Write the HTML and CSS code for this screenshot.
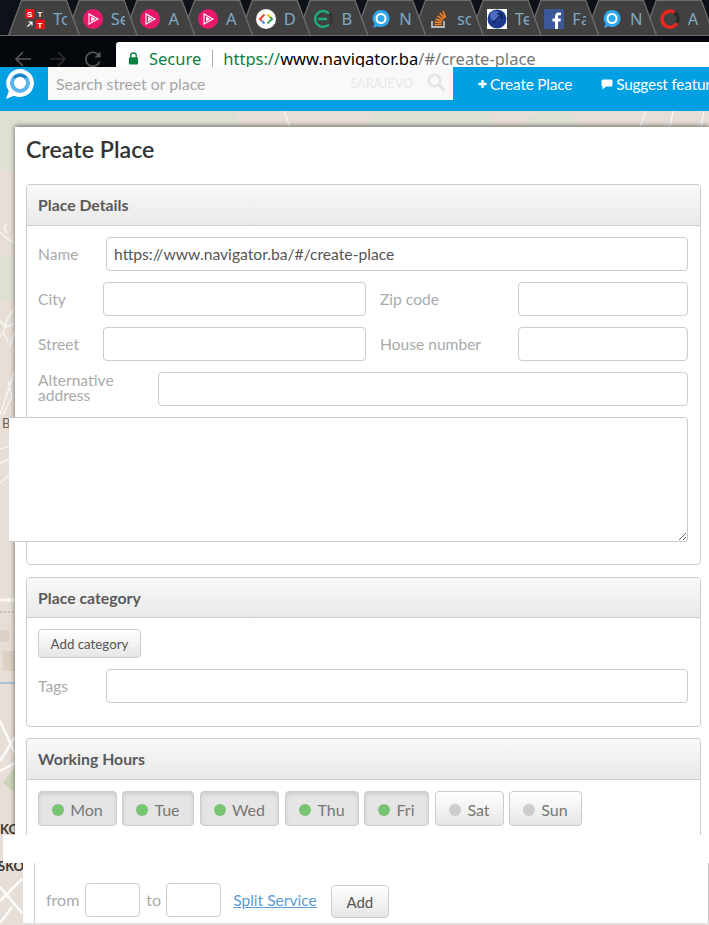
FILE: index.html
```html
<!DOCTYPE html>
<html lang="en">
<head>
    <meta charset="UTF-8">
    <title>Create Place</title>
    <link rel="stylesheet" href="styles.css">
</head>
<body>
<svg class="defs" width="0" height="0">
    <symbol id="ico-plural" viewBox="0 0 20 20">
        <circle cx="10" cy="10" r="10" fill="#e8196b"/>
        <path d="M6 5v10l9-5z" fill="none" stroke="#fff" stroke-width="1.1"/>
        <path d="M8 7.5v5l4.500-2.500z" fill="#fff"/>
    </symbol>
    <symbol id="ico-nav" viewBox="0 0 20 20">
        <path d="M10 1a8.500 8.500 0 1 1-3.500 16.200L2 19l1.500-4.200A8.500 8.500 0 0 1 10 1z" fill="#2ea8ee"/>
        <circle cx="10" cy="9.500" r="4.500" fill="none" stroke="#fff" stroke-width="2"/>
    </symbol>
</svg>

<div class="tabs">
    <div class="tab">
        <svg class="fav" viewBox="0 0 20 20">
            <rect x="0" y="0" width="9.500" height="9.500" fill="#e8141c"/>
            <rect x="10.500" y="0" width="9.500" height="9.500" fill="#444"/>
            <rect x="0" y="10.500" width="9.500" height="9.500" fill="#444"/>
            <rect x="10.500" y="10.500" width="9.500" height="9.500" fill="#e8141c"/>
            <text x="2" y="8" class="fav-text">S</text>
            <text x="12.500" y="8" class="fav-text">T</text>
            <path d="M2.500 17.500l4.500-4.500M3.500 13h3.500v3.500" fill="none" stroke="#fff" stroke-width="1.200"/>
            <text x="12.500" y="18.500" class="fav-text">T</text>
        </svg>
        <span class="tab-name">To</span>
    </div>
    <div class="tab"><svg class="fav"><use href="#ico-plural"/></svg><span class="tab-name">Se</span></div>
    <div class="tab"><svg class="fav"><use href="#ico-plural"/></svg><span class="tab-name">A</span></div>
    <div class="tab"><svg class="fav"><use href="#ico-plural"/></svg><span class="tab-name">A</span></div>
    <div class="tab">
        <svg class="fav" viewBox="0 0 20 20">
            <circle cx="10" cy="10" r="10" fill="#fff"/>
            <path d="M8.500 5.500L4 10l2 2" fill="none" stroke="#ea4335" stroke-width="2"/>
            <path d="M6 12l2.500 2.500" fill="none" stroke="#4285f4" stroke-width="2"/>
            <path d="M11.500 5.500L14 8" fill="none" stroke="#fbbc05" stroke-width="2"/>
            <path d="M14 8l2 2-4.500 4.500" fill="none" stroke="#34a853" stroke-width="2"/>
        </svg>
        <span class="tab-name">D</span>
    </div>
    <div class="tab">
        <svg class="fav" viewBox="0 0 20 20">
            <circle cx="10" cy="10" r="8" fill="none" stroke="#333" stroke-width="2.500"/>
            <path d="M15 4.500A8 8 0 1 0 15 15.500M4 10h9" fill="none" stroke="#1fae7d" stroke-width="2.500"/>
        </svg>
        <span class="tab-name">B</span>
    </div>
    <div class="tab"><svg class="fav"><use href="#ico-nav"/></svg><span class="tab-name">N</span></div>
    <div class="tab">
        <svg class="fav" viewBox="0 0 20 20">
            <path d="M3 12v6h12v-6" fill="none" stroke="#bcbbbb" stroke-width="1.800"/>
            <path d="M5.500 15.500h7M5.700 12.800l7 .8M6.500 10l6.800 2M8.300 7l6 3.500M10.800 4.200l4.800 5M14 2l2.600 6.500" fill="none" stroke="#f48024" stroke-width="1.700"/>
        </svg>
        <span class="tab-name">sc</span>
    </div>
    <div class="tab">
        <svg class="fav" viewBox="0 0 20 20">
            <rect width="20" height="20" fill="#fff"/>
            <circle cx="10" cy="10" r="9.500" fill="#1d3a8f"/>
            <circle cx="8" cy="7" r="5" fill="#4c6cc4"/>
            <path d="M6 14L15 5M10 5h5v5" fill="none" stroke="#10204f" stroke-width="1.500"/>
        </svg>
        <span class="tab-name">Te</span>
    </div>
    <div class="tab">
        <svg class="fav" viewBox="0 0 20 20">
            <rect width="20" height="20" rx="1" fill="#3b5998"/>
            <path d="M14 20v-7.500h2.500l.4-3H14V7.700c0-.9.300-1.400 1.500-1.400H17V3.600c-.3 0-1.200-.1-2.200-.1-2.200 0-3.800 1.300-3.800 3.800v2.200H8.500v3H11V20z" fill="#fff"/>
        </svg>
        <span class="tab-name">Fa</span>
    </div>
    <div class="tab"><svg class="fav"><use href="#ico-nav"/></svg><span class="tab-name">N</span></div>
    <div class="tab">
        <svg class="fav" viewBox="0 0 20 20">
            <path d="M14.500 3.500A8 8 0 1 0 17 14" fill="none" stroke="#e8281e" stroke-width="3.500"/>
            <path d="M14.500 3.500A8 8 0 0 1 17 14" fill="none" stroke="#2a2a2a" stroke-width="3.500"/>
        </svg>
        <span class="tab-name">A</span>
    </div>
</div>

<div class="toolbar">
    <div class="nav-btns">
        <svg class="nav-ico" viewBox="0 0 18 18"><path d="M17 9H2M9 2L2 9l7 7" fill="none" stroke="#5a5a5a" stroke-width="1.600"/></svg>
        <svg class="nav-ico" viewBox="0 0 18 18"><path d="M1 9h15M9 2l7 7-7 7" fill="none" stroke="#2e2e2e" stroke-width="1.600"/></svg>
        <svg class="nav-ico" viewBox="0 0 18 18"><path d="M15.500 11.500A7 7 0 1 1 14 4.500" fill="none" stroke="#5a5a5a" stroke-width="1.700"/><path d="M10.500 7.500H16.500V1.500z" fill="#5a5a5a"/></svg>
    </div>
    <div class="urlbar">
        <svg class="lock" viewBox="0 0 12 14"><path d="M3 6V4a3 3 0 0 1 6 0v2" fill="none" stroke="#0b8043" stroke-width="1.500"/><rect x="1" y="5.500" width="10" height="8" rx="1" fill="#0b8043"/></svg>
        <span class="secure">Secure</span>
        <span class="url-sep"></span>
        <span class="url"><span class="secure">https://</span>www.navigator.ba<span class="url-path">/#/create-place</span></span>
    </div>
</div>

<header class="appbar">
    <div class="logo">
        <svg viewBox="0 0 30 32" width="30" height="32">
            <path d="M15 1a14 14 0 1 1-6 26.700L1 31l2.800-8A14 14 0 0 1 15 1z" fill="#fff"/>
            <circle cx="15" cy="15" r="8" fill="none" stroke="#5db4e8" stroke-width="4"/>
            <path d="M9 10a8 8 0 0 1 12 0" fill="none" stroke="#1b7fc4" stroke-width="2.500"/>
        </svg>
    </div>
    <div class="search">
        <span class="search-hint">Search street or place</span>
        <span class="search-city">SARAJEVO</span>
        <svg class="search-ico" viewBox="0 0 20 20"><circle cx="8" cy="8" r="6" fill="none" stroke="#e4e4e2" stroke-width="2.800"/><path d="M12.500 12.500L18.500 18.500" stroke="#e4e4e2" stroke-width="3.200"/></svg>
    </div>
    <nav class="appnav">
        <a class="appnav-item">
            <svg class="appnav-ico" viewBox="0 0 10 10"><path d="M5 .5v9M.5 5h9" stroke="#fff" stroke-width="2.600"/></svg>
            Create Place
        </a>
        <a class="appnav-item">
            <svg class="appnav-ico appnav-ico-wide" viewBox="0 0 12 11"><path d="M2 .5h8a1.500 1.500 0 0 1 1.500 1.500v4A1.500 1.500 0 0 1 10 7.500H5L1.500 10.500V7.500A1.500 1.500 0 0 1 .5 6V2A1.500 1.500 0 0 1 2 .5z" fill="#fff"/></svg>
            Suggest feature
        </a>
    </nav>
</header>

<main class="main">
    <svg class="map" viewBox="0 0 709 814" width="709" height="814">
        <rect width="709" height="814" fill="#e6ded7"/>
        <path d="M0 0H233L240 16H0zM368 16L376 0H488L495 16zM517 16L540 0H565L582 16zM0 16H15V59H0zM0 146H15V189H0z" fill="#dee0d2"/>
        <path d="M15 655V682L3 672z" fill="#ccd6b8"/>
        <g class="map-blocks">
            <rect y="519" width="9" height="12"/>
            <rect x="3" y="540" width="12" height="20"/>
        </g>
        <g class="map-roads">
            <path d="M640 16l6-16M670 16l3-16M701 16l3-16M290 16l-6-16"/>
            <path d="M0 121L6 127 11 130 15 132M7 112L4 118 8 122"/>
            <path d="M15 196L7 208 4 220 0 226M0 210L6 216 15 212M4 222L8 232M15 220L10 235"/>
            <path d="M0 304L8 280 15 259M3 304L12 285 8 270"/>
            <path d="M0 338L15 334M0 352L15 346M0 372L15 358"/>
        </g>
        <path d="M0 489H15" class="map-road-wide" stroke-dasharray="5 1"/>
        <path d="M0 501H15" class="map-dash"/>
        <path d="M0 572H15" class="map-water"/>
        <g class="map-roads-thick">
            <path d="M0 610L15 642M0 650L15 626M0 660L15 652"/>
            <path d="M0 790L22 768M0 776L22 802M0 812L12 796"/>
        </g>
        <text x="2" y="317" class="map-label">B</text>
        <text x="0" y="723" class="map-label map-label-bold">KO</text>
        <text x="-2" y="760" class="map-label map-label-bold">SKO</text>
    </svg>

    <section class="card">
        <h1 class="card-title">Create Place</h1>

        <div class="panel panel-details">
            <div class="panel-head">Place Details</div>
            <div class="panel-body">
                <div class="row">
                    <label class="lbl lbl-name">Name</label>
                    <input class="inp inp-grow" value="https://www.navigator.ba/#/create-place">
                </div>
                <div class="row">
                    <label class="lbl lbl-short">City</label>
                    <input class="inp inp-half">
                    <label class="lbl lbl-right">Zip code</label>
                    <input class="inp inp-grow">
                </div>
                <div class="row">
                    <label class="lbl lbl-short">Street</label>
                    <input class="inp inp-half">
                    <label class="lbl lbl-right">House number</label>
                    <input class="inp inp-grow">
                </div>
                <div class="row">
                    <label class="lbl lbl-alt">Alternative address</label>
                    <input class="inp inp-grow">
                </div>
                <textarea class="txt"></textarea>
            </div>
        </div>

        <div class="panel panel-category">
            <div class="panel-head">Place category</div>
            <div class="panel-body">
                <button class="btn btn-cat">Add category</button>
                <div class="row">
                    <label class="lbl lbl-name">Tags</label>
                    <input class="inp inp-grow">
                </div>
            </div>
        </div>

        <div class="panel panel-open">
            <div class="panel-head">Working Hours</div>
            <div class="panel-body days">
                <button class="btn day day-on day-mon"><i class="dot"></i>Mon</button>
                <button class="btn day day-on day-tue"><i class="dot"></i>Tue</button>
                <button class="btn day day-on day-wed"><i class="dot"></i>Wed</button>
                <button class="btn day day-on day-thu"><i class="dot"></i>Thu</button>
                <button class="btn day day-on day-fri"><i class="dot"></i>Fri</button>
                <button class="btn day day-sat"><i class="dot"></i>Sat</button>
                <button class="btn day day-sun"><i class="dot"></i>Sun</button>
            </div>
        </div>
    </section>

    <div class="band"></div>

    <section class="lower">
        <div class="lower-body">
            <label class="lbl lbl-time">from</label>
            <input class="inp inp-time">
            <label class="lbl lbl-time">to</label>
            <input class="inp inp-time inp-time-to">
            <a class="split">Split Service</a>
            <button class="btn btn-add">Add</button>
        </div>
    </section>
</main>
</body>
</html>
```

FILE: styles.css
```css
* {
    box-sizing: border-box;
}

html, body {
    margin: 0;
    height: 925px;
    overflow: hidden;
    background: #000;
    font-family: "Lato", "Liberation Sans", sans-serif;
}

.defs {
    display: block;
    height: 0;
}

/* browser tabs */
.tabs {
    display: flex;
    height: 36px;
    padding-left: 8px;
    background: #0c1218;
    border-bottom: 1px solid #6a6a6a;
    overflow: hidden;
}

.tab {
    position: relative;
    flex: none;
    display: flex;
    align-items: center;
    width: 72px;
    height: 35px;
    margin-right: -14.3px;
    padding: 2px 0 0 17px;
    background: #6c6c6c;
    clip-path: polygon(13px 0, 59px 0, 72px 100%, 0 100%);
}

.tab::before {
    content: "";
    position: absolute;
    inset: 0;
    background: #414142;
    clip-path: polygon(14px 1px, 58px 1px, 70.500px 100%, 1.500px 100%);
}

.tab:nth-child(1) { z-index: 12; }
.tab:nth-child(2) { z-index: 11; }
.tab:nth-child(3) { z-index: 10; }
.tab:nth-child(4) { z-index: 9; }
.tab:nth-child(5) { z-index: 8; }
.tab:nth-child(6) { z-index: 7; }
.tab:nth-child(7) { z-index: 6; }
.tab:nth-child(8) { z-index: 5; }
.tab:nth-child(9) { z-index: 4; }
.tab:nth-child(10) { z-index: 3; }
.tab:nth-child(11) { z-index: 2; }
.tab:nth-child(12) { z-index: 1; }

.fav {
    position: relative;
    flex: none;
    width: 20px;
    height: 20px;
}

.fav-text {
    font: bold 8px "Liberation Sans", sans-serif;
    fill: #fff;
}

.tab-name {
    position: relative;
    width: 14px;
    margin-left: 8px;
    overflow: hidden;
    color: #7fa9c4;
    font: 16.500px "Noto Sans", sans-serif;
    white-space: nowrap;
}

/* browser toolbar */
.toolbar {
    display: flex;
    align-items: flex-start;
    height: 31px;
    padding-top: 6px;
    background: #04070c;
    overflow: hidden;
}

.nav-btns {
    display: flex;
    gap: 17px;
    width: 116px;
    padding: 8px 0 0 14px;
}

.nav-ico {
    width: 18px;
    height: 18px;
}

.urlbar {
    flex: 1;
    display: flex;
    align-items: center;
    height: 34px;
    padding-bottom: 1px;
    background: #fff;
    border-radius: 3px 0 0 0;
    font: 16.500px "Noto Sans", sans-serif;
    white-space: nowrap;
}

.lock {
    width: 11px;
    height: 13px;
    margin-left: 12px;
    margin-right: 10px;
}

.secure {
    color: #0b8043;
}

.url-sep {
    width: 1px;
    height: 18px;
    margin: 0 10px 0 11px;
    background: #aaa;
}

.url {
    color: #000;
}

.url-path {
    color: #777;
}

/* app header */
.appbar {
    display: flex;
    align-items: flex-start;
    height: 44px;
    background: #00a0e3;
    color: #fff;
}

.logo {
    flex: none;
    width: 48px;
    padding: 1px 0 0 5px;
}

.search {
    flex: none;
    display: flex;
    align-items: center;
    width: 405px;
    height: 33px;
    padding: 0 7px 0 8px;
    background: #f9f9f9;
}

.search-hint {
    flex: 1;
    color: #a5a5a5;
    font-size: 15.800px;
}

.search-city {
    margin-right: 14px;
    color: #e8e8e8;
    font-size: 12.600px;
}

.search-ico {
    width: 19px;
    height: 19px;
    margin-bottom: 3px;
}

.appnav {
    flex: none;
    display: flex;
    gap: 29px;
    margin-left: 25px;
    padding-top: 8px;
    white-space: nowrap;
}

.appnav-item {
    display: flex;
    align-items: center;
    gap: 3px;
    font-size: 15.400px;
    letter-spacing: -0.2px;
}

.appnav-ico {
    width: 9px;
    height: 10px;
}

.appnav-ico-wide {
    width: 12px;
    height: 11px;
}

/* map and form */
.main {
    position: relative;
    isolation: isolate;
    height: 814px;
    overflow: hidden;
}

.map {
    position: absolute;
    top: 0;
    left: 0;
    z-index: -1;
}

.map-blocks {
    fill: #ddd0c5;
}

.map-roads {
    fill: none;
    stroke: #fff;
    stroke-width: 1.200;
    stroke-opacity: .85;
}

.map-roads-thick {
    fill: none;
    stroke: #fff;
    stroke-width: 2.500;
    stroke-opacity: .9;
}

.map-road-wide {
    stroke: #fff;
    stroke-width: 3;
    stroke-opacity: .85;
}

.map-dash {
    stroke: #a89e94;
    stroke-dasharray: 2 2;
}

.map-water {
    stroke: #6aa7dc;
}

.map-label {
    fill: #6e6154;
    font: 13px "Lato", sans-serif;
}

.map-label-bold {
    fill: #3c3632;
    font-weight: 700;
}

.card {
    margin: 16px 0 0 15px;
    padding: 0 8px 0 11px;
    background: #fff;
    box-shadow: 0 -1px 5px rgba(0, 0, 0, .55);
}

.card-title {
    margin: 0;
    padding-top: 6px;
    height: 57px;
    color: #333;
    font-size: 23.200px;
    font-weight: 600;
    line-height: 32px;
}

.panel {
    margin-bottom: 12px;
    background: #fff;
    border: 1px solid #ccc;
    border-radius: 4px;
}

.panel-category {
    margin-bottom: 11px;
}

.panel-open {
    margin-bottom: 0;
    border-bottom: 0;
    border-radius: 4px 4px 0 0;
}

.panel-head {
    height: 41px;
    padding-left: 11px;
    background: linear-gradient(#f9f9f9, #e9e9e9);
    border-bottom: 1px solid #ccc;
    border-radius: 3px 3px 0 0;
    color: #5a5a5a;
    font-size: 15.800px;
    font-weight: 700;
    line-height: 40px;
}

.panel-category .panel-head {
    height: 40px;
    line-height: 40px;
}

.panel-body {
    padding: 11px 12px 23px 11px;
}

.panel-details .panel-body {
    padding-bottom: 22px;
}

.row {
    display: flex;
    align-items: center;
    margin-bottom: 11px;
}

.panel-body > .row:last-child {
    margin-bottom: 0;
}

.lbl {
    flex: none;
    color: #aaa;
    font-size: 15.600px;
}

.lbl-name { width: 68px; }
.lbl-short { width: 65px; }
.lbl-right { width: 152px; padding-left: 14px; }
.lbl-alt { width: 120px; padding-bottom: 2px; line-height: 15px; }

.inp {
    height: 34px;
    padding: 0 7px;
    background: #fff;
    border: 1px solid #ccc;
    border-radius: 4px;
    color: #555;
    font: 15.670px "Lato", sans-serif;
}

.inp-grow {
    flex: 1;
    min-width: 0;
}

.inp-half {
    flex: none;
    width: 263px;
}

.txt {
    display: block;
    width: 679px;
    height: 125px;
    margin-left: -29px;
    position: relative;
    background: #fff;
    border: 1px solid #ccc;
    border-left: 0;
    border-radius: 0 4px 4px 0;
}

.btn {
    background: linear-gradient(#fff, #e6e6e6);
    border: 1px solid #ccc;
    border-radius: 4px;
    color: #555;
    font-family: "Lato", sans-serif;
    padding: 0;
}

.btn-cat {
    display: block;
    width: 103px;
    height: 29px;
    margin-bottom: 11px;
    font-size: 13.300px;
}

.days {
    display: flex;
    padding-top: 11px;
    padding-bottom: 9px;
}

.day {
    display: flex;
    align-items: center;
    justify-content: center;
    gap: 6px;
    height: 35px;
    padding-top: 2px;
    color: #777;
    font-size: 16px;
}

.day-on {
    background: #e5e5e5;
    box-shadow: inset 0 2px 4px rgba(0, 0, 0, .12);
}

.dot {
    width: 12px;
    height: 12px;
    border-radius: 50%;
    background: #ccc;
}

.day-on .dot {
    background: #78c472;
}

.day-mon { width: 79px; margin-right: 5px; }
.day-tue { width: 72px; margin-right: 6px; }
.day-wed { width: 79px; margin-right: 6px; }
.day-thu { width: 74px; margin-right: 5px; }
.day-fri { width: 65px; margin-right: 6px; }
.day-sat { width: 69px; margin-right: 5px; }
.day-sun { width: 73px; }

.band {
    height: 28px;
    margin-left: 3px;
    background: #fff;
}

.lower {
    height: 60px;
    margin-left: 23px;
    padding-left: 11px;
    background: #fff;
}

.lower-body {
    display: flex;
    align-items: flex-start;
    height: 60px;
    padding: 20px 0 0 11px;
    border-left: 1px solid #ccc;
    border-right: 1px solid #ccc;
}

.lbl-time {
    line-height: 34px;
    font-size: 16px;
}

.inp-time {
    width: 55px;
    margin: 0 6px;
}

.inp-time-to {
    margin-left: 5px;
}

.split {
    margin-left: 6px;
    color: #5b9bd5;
    font-size: 15.600px;
    line-height: 34px;
    text-decoration: underline;
}

.btn-add {
    width: 58px;
    height: 33px;
    margin: 2px 0 0 14px;
    font-size: 15px;
}
```
